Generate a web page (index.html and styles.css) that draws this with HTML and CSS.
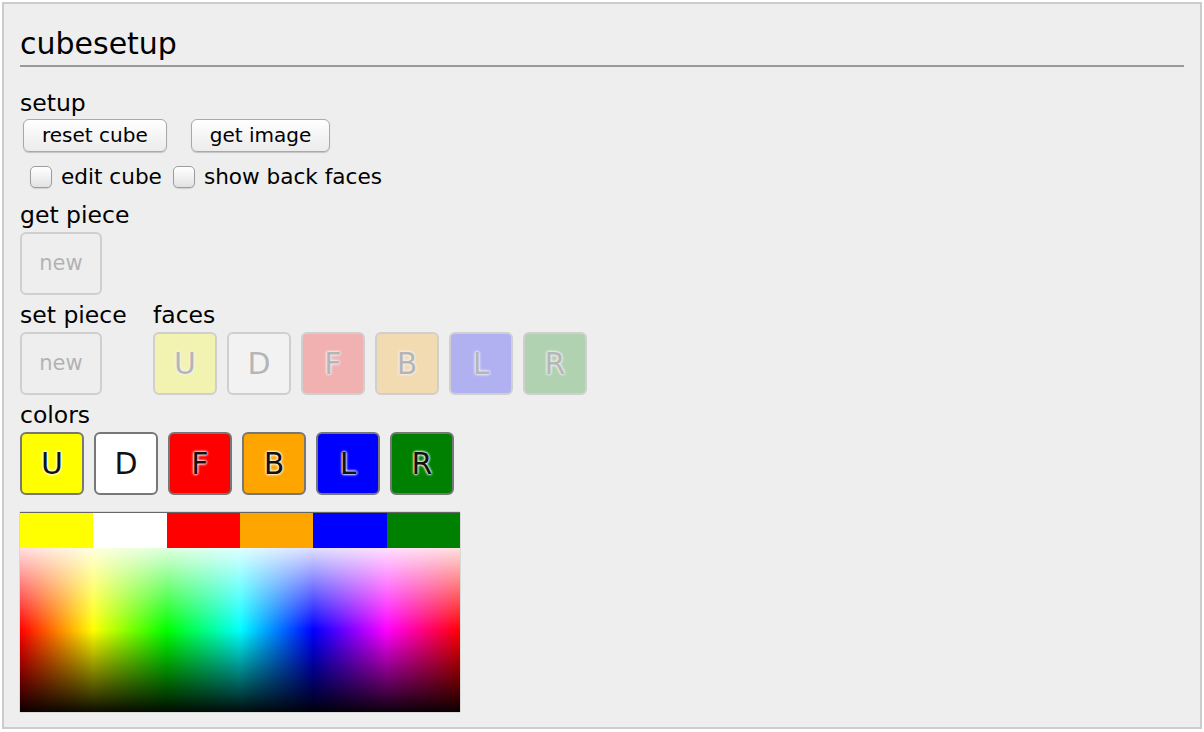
FILE: index.html
```html
<!DOCTYPE html>
<html>
<head>
<meta charset="utf-8">
<title>cubesetup</title>
<link rel="stylesheet" href="styles.css">
</head>
<body>
<div class="panel">
  <h1 class="title">cubesetup</h1>

  <div class="section section-setup">
    <div class="label">setup</div>
    <div class="btn-row">
      <button class="btn">reset cube</button>
      <button class="btn">get image</button>
    </div>
    <div class="check-row">
      <label class="check"><input type="checkbox"><span>edit cube</span></label>
      <label class="check"><input type="checkbox"><span>show back faces</span></label>
    </div>
  </div>

  <div class="section section-get">
    <div class="label">get piece</div>
    <div class="tiles">
      <button class="tile tile-new" disabled>new</button>
    </div>
  </div>

  <div class="section section-set">
    <div class="col col-set">
      <div class="label">set piece</div>
      <div class="tiles">
        <button class="tile tile-new" disabled>new</button>
      </div>
    </div>
    <div class="col">
      <div class="label">faces</div>
      <div class="tiles">
        <button class="tile c-u" disabled>U</button>
        <button class="tile c-d" disabled>D</button>
        <button class="tile c-f" disabled>F</button>
        <button class="tile c-b" disabled>B</button>
        <button class="tile c-l" disabled>L</button>
        <button class="tile c-r" disabled>R</button>
      </div>
    </div>
  </div>

  <div class="section section-colors">
    <div class="label">colors</div>
    <div class="tiles">
      <button class="tile c-u">U</button>
      <button class="tile c-d">D</button>
      <button class="tile c-f">F</button>
      <button class="tile c-b">B</button>
      <button class="tile c-l">L</button>
      <button class="tile c-r">R</button>
    </div>
  </div>

  <div class="picker">
    <div class="swatches">
      <span class="sw c-u"></span>
      <span class="sw c-d"></span>
      <span class="sw c-f"></span>
      <span class="sw c-b"></span>
      <span class="sw c-l"></span>
      <span class="sw c-r"></span>
    </div>
    <div class="spectrum"></div>
  </div>
</div>
</body>
</html>
```

FILE: styles.css
```css
* { box-sizing: border-box; }

html, body {
  margin: 0;
  padding: 0;
  background: #fff;
}

body {
  font-family: "DejaVu Sans", "Liberation Sans", sans-serif;
  color: #000;
}

.panel {
  margin: 2px;
  width: 1200px;
  height: 727px;
  border: 2px solid #cccccc;
  background: #eeeeee;
  padding: 0 16px;
}

.title {
  margin: 22px 0 0 0;
  font-size: 30px;
  font-weight: normal;
  line-height: 36px;
  padding-bottom: 3px;
  border-bottom: 2px solid #999999;
}

.label {
  font-size: 23.5px;
  line-height: 28px;
  height: 28px;
  white-space: nowrap;
}

.section-setup { margin-top: 22px; }
.section-get { margin-top: 10px; }
.section-set { margin-top: 6px; display: flex; }
.section-colors { margin-top: 6px; }

.btn-row {
  display: flex;
  gap: 24px;
  margin-top: 2px;
  padding-left: 3px;
}

.btn {
  height: 33px;
  padding: 0 18px;
  font-family: inherit;
  font-size: 20px;
  line-height: 31px;
  color: #000;
  border: 1px solid #a9a9a9;
  border-radius: 6px;
  background: linear-gradient(#ffffff, #f3f3f3 60%, #ececec);
  box-shadow: 0 1px 1px rgba(0, 0, 0, 0.18);
}

.check-row {
  display: flex;
  align-items: center;
  gap: 11px;
  height: 28px;
  margin-top: 11px;
  padding-left: 10px;
}

.check {
  display: flex;
  align-items: center;
  gap: 9px;
  font-size: 21.6px;
  line-height: 28px;
}

.check input {
  appearance: none;
  -webkit-appearance: none;
  margin: 0;
  width: 22px;
  height: 22px;
  border: 1px solid #9d9d9d;
  border-radius: 5px;
  background: linear-gradient(#ffffff, #f1f1f1 50%, #e2e2e2);
  box-shadow: 0 1px 1px rgba(0, 0, 0, 0.12);
}

.col-set { width: 133px; }

.tiles {
  display: flex;
  gap: 10px;
  margin-top: 3px;
}

.tile {
  width: 64px;
  height: 63px;
  padding: 0;
  border: 2px solid #777777;
  border-radius: 6px;
  background: #eeeeee;
  font-family: inherit;
  font-size: 30px;
  line-height: 59px;
  color: #111;
  text-shadow: 0 0 3px #fff, 0 0 3px #fff, 0 0 2px #fff;
}

.tile:disabled { opacity: 0.25; }

.tile-new {
  width: 82px;
  font-size: 21px;
  color: #000;
  text-shadow: none;
}

.c-u { background: #ffff00; }
.c-d { background: #ffffff; }
.c-f { background: #ff0000; }
.c-b { background: #ffa500; }
.c-l { background: #0000ff; }
.c-r { background: #008000; }

.picker {
  margin-top: 17px;
  width: 440px;
  box-shadow: 0 0 1px rgba(0, 0, 0, 0.5);
}

.swatches {
  display: grid;
  grid-template-columns: repeat(6, 1fr);
  height: 36px;
  border-top: 1px solid #666;
}

.sw { display: block; }

.spectrum {
  height: 164px;
  background:
    linear-gradient(to bottom,
      rgba(255, 255, 255, 0.88) 0%,
      rgba(255, 255, 255, 0) 50%,
      rgba(0, 0, 0, 0) 50%,
      rgba(0, 0, 0, 0.95) 100%),
    linear-gradient(to right,
      #ff0000 0%,
      #ffff00 16.67%,
      #00ff00 33.33%,
      #00ffff 50%,
      #0000ff 66.67%,
      #ff00ff 83.33%,
      #ff0000 100%);
}
```
